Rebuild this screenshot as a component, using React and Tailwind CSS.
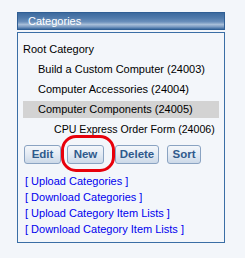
import React from "react";

const font = { fontFamily: '"Liberation Sans", Arial, sans-serif' };

function Btn({ children, w, ml }) {
  return (
    <button
      className={`h-[19px] ${w} ${ml} shrink-0 rounded-[3px] border border-[#8aa3c2] bg-[linear-gradient(to_bottom,#f4f7fb_0%,#e3eaf3_50%,#ccd9e8_100%)] text-[11.5px] font-bold leading-none text-[#2f5a8c] flex items-center justify-center`}
    >
      {children}
    </button>
  );
}

export default function App() {
  return (
    <div className="w-[245px] h-[258px] bg-[#f3f6fa] pt-[12px] pl-[17px]" style={font}>
      <div className="w-[208px]">
        <div className="h-[18px] border border-[#2f5e94] bg-[linear-gradient(to_bottom,#3c6a9e_0%,#4f7aab_30%,#6a8fbb_55%,#a7bed8_72%,#7c9cc3_86%,#3c6a9e_100%)] pl-[10px] text-[11px] leading-[16px] text-white">
          Categories
        </div>
        <div className="mt-[2px] h-[211px] border border-[#3a6ea5] px-[5px] pt-[8px]">
          <div className="flex flex-col gap-[3px] text-[11px] leading-[17px] text-black whitespace-nowrap">
            <div className="h-[17px]">Root Category</div>
            <div className="h-[17px] pl-[15px]">Build a Custom Computer (24003)</div>
            <div className="h-[17px] pl-[15px]">Computer Accessories (24004)</div>
            <div className="h-[17px] pl-[15px] bg-[#d3d3d3]">Computer Components (24005)</div>
            <div className="h-[17px] pl-[31px] text-[10.6px]">CPU Express Order Form (24006)</div>
          </div>
          <div className="mt-[7px] ml-[1px] flex">
            <Btn w="w-[37px]" ml="">Edit</Btn>
            <div className="relative ml-[6px]">
              <Btn w="w-[37px]" ml="">New</Btn>
              <div className="pointer-events-none absolute left-[-6px] top-[-10px] h-[37px] w-[54px] rounded-[15px] border-[3px] border-[#e8000b]" />
            </div>
            <Btn w="w-[44px]" ml="ml-[11px]">Delete</Btn>
            <Btn w="w-[34px]" ml="ml-[8px]">Sort</Btn>
          </div>
          <div className="mt-[9px] ml-[2px] flex flex-col text-[11px] leading-[16px] text-[#0000ee] whitespace-nowrap">
            <a className="cursor-pointer">[ Upload Categories ]</a>
            <a className="cursor-pointer">[ Download Categories ]</a>
            <a className="cursor-pointer">[ Upload Category Item Lists ]</a>
            <a className="cursor-pointer">[ Download Category Item Lists ]</a>
          </div>
        </div>
      </div>
    </div>
  );
}
